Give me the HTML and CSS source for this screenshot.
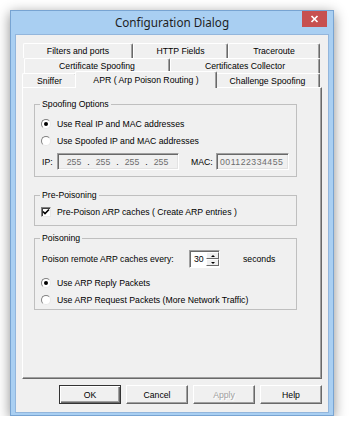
FILE: index.html
```html
<!DOCTYPE html>
<html lang="en">
<head>
    <meta charset="UTF-8">
    <title>Configuration Dialog</title>
    <link rel="stylesheet" href="styles.css">
</head>
<body>
    <div class="window">
        <div class="titlebar">
            <span></span>
            <span class="title">Configuration Dialog</span>
            <span class="close">
                <svg width="25" height="16" viewBox="0 0 25 16">
                    <path d="M9.5 5 L15.5 11 M15.5 5 L9.5 11" stroke="#fff" stroke-width="1.7" fill="none"/>
                </svg>
            </span>
        </div>

        <div class="client">
            <div class="tabs">
                <div class="tab-row row1">
                    <div class="tab t-filters">Filters and ports</div>
                    <div class="tab t-http">HTTP Fields</div>
                    <div class="tab t-trace">Traceroute</div>
                </div>
                <div class="tab-row row2">
                    <div class="tab t-certspoof">Certificate Spoofing</div>
                    <div class="tab t-certcoll">Certificates Collector</div>
                </div>
                <div class="tab-row row3">
                    <div class="tab t-sniffer">Sniffer</div>
                    <div class="tab t-apr selected">APR ( Arp Poison Routing )</div>
                    <div class="tab t-challenge">Challenge Spoofing</div>
                </div>
            </div>

            <div class="panel">
                <fieldset class="group spoofing">
                    <legend>Spoofing Options</legend>
                    <label class="option"><span class="radio checked"></span>Use Real IP and MAC addresses</label>
                    <label class="option"><span class="radio"></span>Use Spoofed IP and MAC addresses</label>
                    <div class="addr-row">
                        <span class="field-label ip-label">IP:</span>
                        <div class="edit ip">
                            <span class="octet">255</span><span class="dot">.</span>
                            <span class="octet">255</span><span class="dot">.</span>
                            <span class="octet">255</span><span class="dot">.</span>
                            <span class="octet">255</span>
                        </div>
                        <span class="field-label mac-label">MAC:</span>
                        <div class="edit mac">001122334455</div>
                    </div>
                </fieldset>

                <fieldset class="group prepoison">
                    <legend>Pre-Poisoning</legend>
                    <label class="option">
                        <span class="checkbox">
                            <svg width="8" height="8" viewBox="0 0 8 8">
                                <path d="M1 3.5 L3 5.5 L7 1.5" stroke="#000" stroke-width="1.6" fill="none"/>
                            </svg>
                        </span>Pre-Poison ARP caches ( Create ARP entries )
                    </label>
                </fieldset>

                <fieldset class="group poisoning">
                    <legend>Poisoning</legend>
                    <div class="interval-row">
                        <span class="interval-label">Poison remote ARP caches every:</span>
                        <div class="spin">
                            <span class="spin-value">30</span>
                            <span class="spin-buttons">
                                <span class="spin-btn"><span class="arrow-up"></span></span>
                                <span class="spin-btn"><span class="arrow-down"></span></span>
                            </span>
                        </div>
                        <span class="seconds">seconds</span>
                    </div>
                    <label class="option reply"><span class="radio checked"></span>Use ARP Reply Packets</label>
                    <label class="option"><span class="radio"></span>Use ARP Request Packets (More Network Traffic)</label>
                </fieldset>
            </div>

            <div class="buttons">
                <button class="btn default">OK</button>
                <button class="btn">Cancel</button>
                <button class="btn disabled">Apply</button>
                <button class="btn">Help</button>
            </div>
        </div>
    </div>
</body>
</html>
```

FILE: styles.css
```css
body {
    margin: 0;
    background: #fff;
    font-family: "Liberation Sans", Arial, sans-serif;
    font-size: 8.7px;
    color: #000;
}
.window {
    margin: 10px 0 0 10px;
    width: 324px;
    height: 406px;
    box-sizing: border-box;
    background: #a9cff2;
    border: 1px solid #78a4d2;
    box-shadow: 0 3px 12px rgba(0, 0, 0, 0.45);
    padding: 0 5px 3px 5px;
    display: flex;
    flex-direction: column;
}
.titlebar {
    height: 24px;
    display: grid;
    grid-template-columns: 1fr auto 1fr;
    align-items: start;
}
.title {
    font-family: "Noto Sans", sans-serif;
    font-size: 11.7px;
    line-height: 22px;
    color: #1e1e1e;
}
.close {
    justify-self: end;
    margin-right: 1px;
    width: 25px;
    height: 16px;
    background: #c75050;
    display: flex;
}
.client {
    flex: 1;
    background: #f0f0f0;
    box-shadow: 0 0 0 1px #93b6dc;
    padding: 8px 6px 8px 6px;
    display: flex;
    flex-direction: column;
}

/* tabs */
.tabs {
    display: flex;
    flex-direction: column;
}
.tab-row {
    display: flex;
    height: 15px;
}
.row1 { margin-left: 1px; }
.row2 { margin-left: 2px; }
.row3 { height: 14px; }
.tab {
    box-sizing: border-box;
    height: 100%;
    background: #f0f0f0;
    border-top: 1px solid #fff;
    border-left: 1px solid #fff;
    border-right: 1px solid #696969;
    box-shadow: inset -1px 0 0 #a0a0a0;
    border-radius: 2px 2px 0 0;
    display: flex;
    align-items: center;
    justify-content: center;
    white-space: nowrap;
}
.t-filters { width: 110px; }
.t-http { width: 95px; }
.t-trace { width: 92px; }
.t-certspoof { width: 146px; }
.t-certcoll { width: 150px; }
.t-sniffer { width: 55px; }
.t-apr { width: 138px; }
.t-challenge { width: 105px; }
.tab.selected {
    position: relative;
    z-index: 1;
    height: 17px;
    margin: -2px -2px -1px -2px;
    width: 142px;
    padding-bottom: 1px;
}

/* panel */
.panel {
    box-sizing: border-box;
    height: 292px;
    background: #f0f0f0;
    border-top: 1px solid #fff;
    border-left: 1px solid #fff;
    border-right: 1px solid #696969;
    border-bottom: 1px solid #696969;
    box-shadow: inset -1px -1px 0 #a0a0a0;
    padding: 10px 0 0 11px;
}
.group {
    width: 263px;
    box-sizing: border-box;
    margin: 0;
    border: 1px solid #bfbfbf;
    padding: 0 5px;
    min-inline-size: 0;
}
.group legend {
    padding: 0 2px;
    line-height: 12px;
}
.spoofing { padding-top: 5px; padding-bottom: 6px; }
.prepoison { margin-top: 12px; padding-top: 2px; padding-bottom: 5px; }
.poisoning { margin-top: 6px; padding-top: 6px; padding-bottom: 1px; }

.option {
    display: flex;
    align-items: center;
    height: 17px;
    white-space: nowrap;
}
.option.reply { margin-top: 6px; }
.radio {
    box-sizing: border-box;
    width: 10px;
    height: 10px;
    margin: 0 6px 0 1px;
    border-radius: 50%;
    border: 1px solid;
    border-color: #808080 #e8e8e8 #e8e8e8 #808080;
    background: #fff;
    display: flex;
    align-items: center;
    justify-content: center;
}
.radio.checked::after {
    content: "";
    width: 4px;
    height: 4px;
    border-radius: 50%;
    background: #000;
}
.checkbox {
    box-sizing: border-box;
    width: 10px;
    height: 10px;
    margin: 0 6px 0 1px;
    border: 1px solid;
    border-color: #808080 #e8e8e8 #e8e8e8 #808080;
    box-shadow: inset 1px 1px 0 #404040;
    background: #fff;
    display: flex;
    align-items: center;
    justify-content: center;
}

/* address fields */
.addr-row {
    display: flex;
    align-items: center;
    height: 17px;
    margin-top: 4px;
    padding-left: 2px;
}
.field-label { display: block; }
.ip-label { width: 15px; }
.mac-label { width: 25px; margin-left: 12px; }
.edit {
    box-sizing: border-box;
    height: 17px;
    background: #f0f0f0;
    border: 1px solid;
    border-color: #a0a0a0 #fff #fff #a0a0a0;
    box-shadow: inset 1px 1px 0 #696969, inset -1px -1px 0 #e3e3e3;
    color: #6d6d6d;
    display: flex;
    align-items: center;
}
.ip {
    width: 122px;
    padding-left: 5px;
}
.octet {
    width: 22px;
    text-align: center;
}
.dot {
    width: 7px;
    text-align: center;
    color: #000;
}
.mac {
    width: 73px;
    padding-left: 3px;
    letter-spacing: 0.5px;
    white-space: nowrap;
    overflow: hidden;
}

/* interval spinner */
.interval-row {
    display: flex;
    align-items: center;
    height: 18px;
    padding-left: 2px;
}
.interval-label { width: 147px; }
.spin {
    box-sizing: border-box;
    width: 31px;
    height: 18px;
    background: #fff;
    border: 1px solid;
    border-color: #a0a0a0 #fff #fff #a0a0a0;
    box-shadow: inset 1px 1px 0 #696969;
    display: flex;
}
.spin-value {
    flex: 1;
    padding: 3px 0 0 4px;
}
.spin-buttons {
    width: 13px;
    display: flex;
    flex-direction: column;
    padding: 1px 0;
}
.spin-btn {
    flex: 1;
    background: #f0f0f0;
    border-top: 1px solid #fff;
    border-left: 1px solid #fff;
    border-right: 1px solid #696969;
    border-bottom: 1px solid #696969;
    display: flex;
    align-items: center;
    justify-content: center;
}
.arrow-up {
    border-left: 2px solid transparent;
    border-right: 2px solid transparent;
    border-bottom: 2px solid #000;
}
.arrow-down {
    border-left: 2px solid transparent;
    border-right: 2px solid transparent;
    border-top: 2px solid #000;
}
.seconds { margin-left: 23px; }

/* buttons */
.buttons {
    display: flex;
    justify-content: flex-end;
    gap: 5px;
    margin-top: 6px;
}
.btn {
    box-sizing: border-box;
    width: 62px;
    height: 19px;
    padding: 0;
    font: inherit;
    color: #000;
    background: #f0f0f0;
    border: 1px solid;
    border-color: #fff #696969 #696969 #fff;
    box-shadow: inset -1px -1px 0 #a0a0a0;
}
.btn.default {
    border: 1px solid #333;
    box-shadow: inset 1px 1px 0 #fff, inset -1px -1px 0 #696969, inset -2px -2px 0 #a0a0a0;
}
.btn.disabled {
    color: #a0a0a0;
    text-shadow: 1px 1px 0 #fff;
}
```
